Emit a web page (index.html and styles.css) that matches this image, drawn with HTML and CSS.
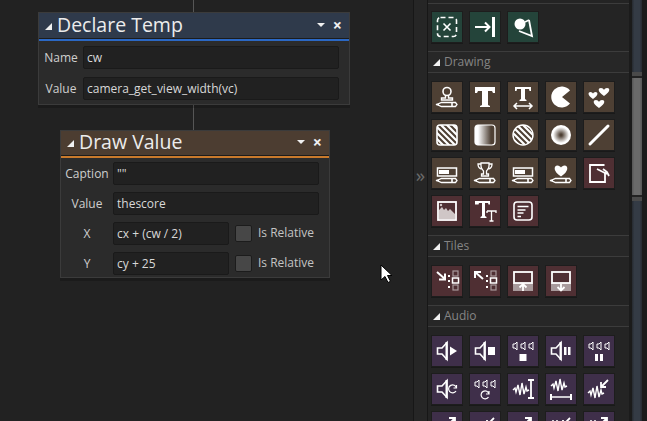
FILE: index.html
```html
<!DOCTYPE html>
<html lang="en">

<head>
    <meta charset="UTF-8">
    <title>Object Events</title>
    <link rel="stylesheet" href="styles.css">
</head>

<body>
    <svg class="defs" width="0" height="0" aria-hidden="true">
        <defs>
            <linearGradient id="fadeH"><stop offset="0.15" stop-color="#fff"/><stop offset="0.8" stop-color="#4e4034"/></linearGradient>
            <radialGradient id="fadeR"><stop offset="0.1" stop-color="#4e4034"/><stop offset="0.8" stop-color="#fff"/></radialGradient>
            <clipPath id="clipRect"><rect x="5" y="5" width="20" height="20" rx="3"/></clipPath>
            <clipPath id="clipCircle"><circle cx="15" cy="15" r="10"/></clipPath>
            <symbol id="stripes" viewBox="0 0 30 30">
                <path d="M0 -16L40 24M0 -10L40 30M0 -4L40 36M0 2L40 42M0 8L40 48M0 14L40 54" stroke="#fff" stroke-width="2.200"/>
            </symbol>
            <symbol id="pencil" viewBox="0 0 30 30">
                <path d="M9.500 20.500h14l1.500 2-1.500 2h-14L5 22.500z" fill="none" stroke="#fff" stroke-width="1.300"/>
                <path d="M4 22.500h3M20 21v3" stroke="#fff" stroke-width="1.600"/>
            </symbol>
            <symbol id="bar" viewBox="0 0 30 30">
                <rect x="5.500" y="10" width="19" height="8" fill="none" stroke="#fff" stroke-width="1.500"/>
                <rect x="7" y="12" width="10" height="4" fill="#fff"/>
            </symbol>
            <symbol id="speaker" viewBox="0 0 30 30">
                <path d="M5.500 12h4.500l5-5.500v17l-5-5.500H5.500z" fill="none" stroke="#fff" stroke-width="1.600"/>
                <path d="M14.500 6v18" stroke="#fff" stroke-width="2"/>
            </symbol>
            <symbol id="speakers" viewBox="0 0 30 30">
                <g fill="none" stroke="#fff" stroke-width="1">
                    <path d="M5 8h2l2-2v8l-2-2H5z"/>
                    <path d="M13 8h2l2-2v8l-2-2h-2z"/>
                    <path d="M21 8h2l2-2v8l-2-2h-2z"/>
                </g>
            </symbol>
            <symbol id="wave" viewBox="0 0 30 30">
                <path d="M5 16l2-2 1 4 2-7 2 10 2-12 2 11 2-7 1 4 2-1" fill="none" stroke="#fff" stroke-width="1.400"/>
            </symbol>
            <symbol id="slots" viewBox="0 0 30 30">
                <path d="M16 10h2M16 15h2M16 21h2" stroke="#fff" stroke-width="2"/>
                <rect x="21" y="5" width="5" height="5" fill="none" stroke="#a89a9c" stroke-width="1.200"/>
                <rect x="20.500" y="12" width="6" height="5" fill="none" stroke="#fff" stroke-width="1.500"/>
                <rect x="21" y="19" width="5" height="5" fill="none" stroke="#a89a9c" stroke-width="1.200"/>
            </symbol>
        </defs>
    </svg>

    <div class="app">
        <main class="canvas">
            <div class="wire wire-top"></div>
            <div class="wire wire-mid"></div>

            <section class="node node-temp">
                <header class="node-title title-blue">
                    <span class="corner"></span>
                    <h2>Declare Temp</h2>
                    <span class="menu-arrow"></span>
                    <span class="close">×</span>
                </header>
                <div class="node-body">
                    <div class="row">
                        <label class="row-label">Name</label>
                        <div class="field">cw</div>
                    </div>
                    <div class="row">
                        <label class="row-label">Value</label>
                        <div class="field">camera_get_view_width(vc)</div>
                    </div>
                </div>
            </section>

            <section class="node node-draw">
                <header class="node-title title-orange">
                    <span class="corner"></span>
                    <h2>Draw Value</h2>
                    <span class="menu-arrow"></span>
                    <span class="close">×</span>
                </header>
                <div class="node-body">
                    <div class="row">
                        <label class="row-label">Caption</label>
                        <div class="field">""</div>
                    </div>
                    <div class="row">
                        <label class="row-label">Value</label>
                        <div class="field">thescore</div>
                    </div>
                    <div class="row">
                        <label class="row-label">X</label>
                        <div class="field field-short">cx + (cw / 2)</div>
                        <span class="check"></span>
                        <span class="check-label">Is Relative</span>
                    </div>
                    <div class="row">
                        <label class="row-label">Y</label>
                        <div class="field field-short">cy + 25</div>
                        <span class="check"></span>
                        <span class="check-label">Is Relative</span>
                    </div>
                </div>
            </section>

            <svg class="cursor" width="14" height="20" viewBox="0 0 14 20">
                <path d="M1 1v15l4-3.500 3 6 2.500-1.200-3-5.800H12z" fill="#fff" stroke="#000"/>
            </svg>
        </main>

        <div class="splitter">»</div>

        <aside class="palette">
            <div class="top-rule"></div>

            <div class="tiles">
                <div class="tile green">
                    <svg viewBox="0 0 30 30"><rect x="5.500" y="5.500" width="19" height="19" rx="3" fill="none" stroke="#fff" stroke-width="1.600" stroke-dasharray="5 3"/><path d="M11.500 11.500l7 7M18.500 11.500l-7 7" stroke="#fff" stroke-width="1.600"/></svg>
                </div>
                <div class="tile green">
                    <svg viewBox="0 0 30 30"><path d="M5 15h14M15 10.500l4.500 4.500-4.500 4.500" fill="none" stroke="#fff" stroke-width="2"/><path d="M23.500 5v20" stroke="#fff" stroke-width="3"/></svg>
                </div>
                <div class="tile green">
                    <svg viewBox="0 0 30 30"><circle cx="12" cy="12" r="5.500" fill="#fff"/><path d="M21 8l3 16-13-5" fill="none" stroke="#fff" stroke-width="1.800"/><path d="M17 10l4-2" stroke="#fff" stroke-width="1.500"/></svg>
                </div>
            </div>

            <h3 class="section"><span class="corner corner-dim"></span>Drawing</h3>
            <div class="tiles">
                <div class="tile brown">
                    <svg viewBox="0 0 30 30"><circle cx="15" cy="9.500" r="4" fill="none" stroke="#fff" stroke-width="1.600"/><path d="M13.500 13v3h-4v2h11v-2h-4v-3" fill="none" stroke="#fff" stroke-width="1.400"/><use href="#pencil"/></svg>
                </div>
                <div class="tile brown">
                    <svg viewBox="0 0 30 30"><path d="M5 5h20v6h-2l-1-2h-4v14l2 1v1h-10v-1l2-1V9H8l-1 2H5z" fill="#fff"/></svg>
                </div>
                <div class="tile brown">
                    <svg viewBox="0 0 30 30"><path d="M7 5h16v4h-1.500l-.5-2h-4v10l1.500 1v1h-7v-1l1.500-1V7H9l-.5 2H7z" fill="#fff"/><path d="M6 24h18M9 21l-3 3 3 3M21 21l3 3-3 3" fill="none" stroke="#fff" stroke-width="1.500"/></svg>
                </div>
                <div class="tile brown">
                    <svg viewBox="0 0 30 30"><path d="M16 15l8-6.500a10.500 10.500 0 1 0 0 13z" fill="#fff"/></svg>
                </div>
                <div class="tile brown">
                    <svg viewBox="0 0 30 30" fill="#fff"><path d="M9 17c-6-4-5-7-2.500-7 1.200 0 2 .8 2.500 1.500.5-.7 1.300-1.500 2.500-1.500 2.500 0 3.500 3-2.500 7z"/><path d="M20 14c-7-4.500-6-8-3-8 1.300 0 2.400 1 3 1.800.6-.8 1.700-1.800 3-1.800 3 0 4 3.500-3 8z"/><path d="M15 26c-7-4.500-6-8-3-8 1.300 0 2.400 1 3 1.800.6-.8 1.700-1.800 3-1.800 3 0 4 3.500-3 8z"/></svg>
                </div>

                <div class="tile brown">
                    <svg viewBox="0 0 30 30"><rect x="5" y="5" width="20" height="20" rx="3" fill="none" stroke="#fff" stroke-width="1.600"/><g clip-path="url(#clipRect)"><use href="#stripes"/></g></svg>
                </div>
                <div class="tile brown">
                    <svg viewBox="0 0 30 30"><rect x="5" y="5" width="20" height="20" rx="3" fill="url(#fadeH)" stroke="#fff" stroke-width="1.200"/></svg>
                </div>
                <div class="tile brown">
                    <svg viewBox="0 0 30 30"><circle cx="15" cy="15" r="10" fill="none" stroke="#fff" stroke-width="1.400"/><g clip-path="url(#clipCircle)"><use href="#stripes"/></g></svg>
                </div>
                <div class="tile brown">
                    <svg viewBox="0 0 30 30"><circle cx="15" cy="15" r="10" fill="url(#fadeR)"/></svg>
                </div>
                <div class="tile brown">
                    <svg viewBox="0 0 30 30"><path d="M6 24l18-18" stroke="#fff" stroke-width="3" stroke-linecap="round"/></svg>
                </div>

                <div class="tile brown">
                    <svg viewBox="0 0 30 30"><use href="#bar"/><use href="#pencil"/></svg>
                </div>
                <div class="tile brown">
                    <svg viewBox="0 0 30 30"><path d="M11 5h8v3c0 3-2 4-2.500 5v3h2v2h-7v-2h2v-3c-.5-1-2.500-2-2.500-5zM11 6H8c0 3 1.500 4.500 3.500 5M19 6h3c0 3-1.500 4.500-3.500 5" fill="none" stroke="#fff" stroke-width="1.300"/><use href="#pencil"/></svg>
                </div>
                <div class="tile brown">
                    <svg viewBox="0 0 30 30"><use href="#bar"/><use href="#pencil"/></svg>
                </div>
                <div class="tile brown">
                    <svg viewBox="0 0 30 30"><path d="M15 18.500c-8-5-7.500-11-3.500-11 1.500 0 2.800 1 3.500 2 .7-1 2-2 3.500-2 4 0 4.500 6-3.500 11z" fill="#fff"/><use href="#pencil"/></svg>
                </div>
                <div class="tile maroon">
                    <svg viewBox="0 0 30 30"><path d="M20.500 7H6v17h15V14" fill="none" stroke="#fff" stroke-width="1.800"/><path d="M13 11l10 5M19 11l4 3 2 4" fill="none" stroke="#fff" stroke-width="1.800"/></svg>
                </div>

                <div class="tile maroon">
                    <svg viewBox="0 0 30 30"><rect x="6" y="6" width="18" height="18" fill="none" stroke="#fff" stroke-width="1.800"/><path d="M7 23v-9l3-3 2 3 2-2 2 3 2-2 5 5v5z" fill="#cfc6c6"/><circle cx="9" cy="9" r="1.200" fill="#cfc6c6"/></svg>
                </div>
                <div class="tile maroon">
                    <svg viewBox="0 0 30 30"><path d="M5 5h15v3.500h-1.500l-.5-1.500h-3v13l1.500 1v1h-6v-1l1.500-1V7H9l-.5 1.500H5z" fill="#fff"/><path d="M17 15h9v2M17 17v-2M21.500 15v10M19.500 25h4" fill="none" stroke="#fff" stroke-width="1.300"/></svg>
                </div>
                <div class="tile maroon">
                    <svg viewBox="0 0 30 30"><rect x="6" y="6" width="18" height="18" rx="3" fill="none" stroke="#fff" stroke-width="1.600"/><path d="M9.500 10.500h11M9.500 14h8M9.500 17h6M9.500 20.500h3.500" stroke="#fff" stroke-width="1.500"/></svg>
                </div>
            </div>

            <h3 class="section"><span class="corner corner-dim"></span>Tiles</h3>
            <div class="tiles">
                <div class="tile maroon">
                    <svg viewBox="0 0 30 30"><path d="M5 6l8 7M13 7.500v6H7" fill="none" stroke="#fff" stroke-width="2"/><use href="#slots"/></svg>
                </div>
                <div class="tile maroon">
                    <svg viewBox="0 0 30 30"><path d="M13 13L5 6M5 12V6h6" fill="none" stroke="#fff" stroke-width="2"/><use href="#slots"/></svg>
                </div>
                <div class="tile maroon">
                    <svg viewBox="0 0 30 30"><rect x="5" y="17" width="20" height="8" fill="#a89a9c"/><rect x="6" y="6" width="18" height="11" fill="#4f2f33" stroke="#fff" stroke-width="1.800"/><path d="M15 25v-6M11.500 21.500l3.500-3.500 3.500 3.500" fill="none" stroke="#fff" stroke-width="1.800"/></svg>
                </div>
                <div class="tile maroon">
                    <svg viewBox="0 0 30 30"><rect x="5" y="17" width="20" height="8" fill="#a89a9c"/><rect x="6" y="6" width="18" height="11" fill="#4f2f33" stroke="#fff" stroke-width="1.800"/><path d="M15 18v6M11.500 21l3.500 3.500 3.500-3.500" fill="none" stroke="#fff" stroke-width="1.800"/></svg>
                </div>
            </div>

            <h3 class="section"><span class="corner corner-dim"></span>Audio</h3>
            <div class="tiles">
                <div class="tile purple">
                    <svg viewBox="0 0 30 30"><use href="#speaker"/><path d="M18 10.500l7 4.500-7 4.500z" fill="#fff"/></svg>
                </div>
                <div class="tile purple">
                    <svg viewBox="0 0 30 30"><use href="#speaker"/><rect x="18" y="11" width="7" height="8" fill="#fff"/></svg>
                </div>
                <div class="tile purple">
                    <svg viewBox="0 0 30 30"><use href="#speakers"/><rect x="11.500" y="18" width="7" height="7" fill="#fff"/></svg>
                </div>
                <div class="tile purple">
                    <svg viewBox="0 0 30 30"><use href="#speaker"/><path d="M18 11h2.500v8H18zM22 11h2.500v8H22z" fill="#fff"/></svg>
                </div>
                <div class="tile purple">
                    <svg viewBox="0 0 30 30"><use href="#speakers"/><path d="M11 18h3v7h-3zM16 18h3v7h-3z" fill="#fff"/></svg>
                </div>

                <div class="tile purple">
                    <svg viewBox="0 0 30 30"><use href="#speaker"/><path d="M24.500 14a4 4 0 1 0-.5 3M24.500 11v3h-3" fill="none" stroke="#fff" stroke-width="1.200"/></svg>
                </div>
                <div class="tile purple">
                    <svg viewBox="0 0 30 30"><use href="#speakers"/><path d="M19 20a4 4 0 1 0-.5 3M19 17v3h-3" fill="none" stroke="#fff" stroke-width="1.200"/></svg>
                </div>
                <div class="tile purple">
                    <svg viewBox="0 0 30 30"><use href="#wave"/><path d="M23 6v18M20 6h6M20 24h6" fill="none" stroke="#fff" stroke-width="1.800"/></svg>
                </div>
                <div class="tile purple">
                    <svg viewBox="0 0 30 30"><use href="#wave" y="-4"/><path d="M6 23h18" stroke="#fff" stroke-width="1.500"/><path d="M5 20v6M25 20v6" stroke="#fff" stroke-width="2"/></svg>
                </div>
                <div class="tile purple">
                    <svg viewBox="0 0 30 30"><use href="#wave" x="-1" y="3"/><path d="M24 6l-7 7M17 8v5h5" fill="none" stroke="#fff" stroke-width="1.800"/></svg>
                </div>

                <div class="tile purple">
                    <svg viewBox="0 0 30 30"><path d="M15 14l7-7M17 6h6v6" fill="none" stroke="#fff" stroke-width="1.800"/><path d="M5 16h6" stroke="#fff" stroke-width="1.500"/></svg>
                </div>
                <div class="tile purple">
                    <svg viewBox="0 0 30 30"><path d="M24 6l-7 7M17 8v5h5" fill="none" stroke="#fff" stroke-width="1.800"/><path d="M5 16h6" stroke="#fff" stroke-width="1.500"/></svg>
                </div>
                <div class="tile purple">
                    <svg viewBox="0 0 30 30"><path d="M15 14l7-7M17 6h6v6" fill="none" stroke="#fff" stroke-width="1.800"/><path d="M5 16h6" stroke="#fff" stroke-width="1.500"/></svg>
                </div>
                <div class="tile purple">
                    <svg viewBox="0 0 30 30"><path d="M24 6l-7 7M17 8v5h5" fill="none" stroke="#fff" stroke-width="1.800"/><path d="M7 8v6M11 8v6" stroke="#fff" stroke-width="1.500"/></svg>
                </div>
                <div class="tile purple">
                    <svg viewBox="0 0 30 30"><path d="M15 14l7-7M17 6h6v6" fill="none" stroke="#fff" stroke-width="1.800"/><path d="M7 8v6M11 8v6" stroke="#fff" stroke-width="1.500"/></svg>
                </div>
            </div>
        </aside>

        <div class="scrollbar">
            <div class="scroll-track scroll-track-top"></div>
            <div class="scroll-cap"></div>
            <div class="scroll-thumb"></div>
            <div class="scroll-cap scroll-cap-end"></div>
            <div class="scroll-track"></div>
        </div>
    </div>
</body>

</html>
```

FILE: styles.css
```css
html,
body {
    margin: 0;
    height: 100%;
    overflow: hidden;
}

body {
    font-family: 'Open Sans', 'Noto Sans', sans-serif;
    background-color: #222222;
    color: #dcdcdc;
}

.defs {
    position: absolute;
}

.app {
    display: flex;
    height: 421px;
    overflow: hidden;
}

/* canvas with the event nodes */

.canvas {
    position: relative;
    width: 413px;
    flex: none;
}

.wire {
    position: absolute;
    left: 193px;
    width: 1px;
    background-color: #565656;
}

.wire-top {
    top: 0;
    height: 12px;
}

.wire-mid {
    top: 105px;
    height: 25px;
}

.node {
    position: absolute;
    box-sizing: border-box;
    background-color: #2b2b2b;
    border: 1px solid #3b3b3b;
    box-shadow: 0 3px 0 rgba(0, 0, 0, 0.18);
}

.node-temp {
    left: 38px;
    top: 12px;
    width: 312px;
    height: 93px;
}

.node-draw {
    left: 60px;
    top: 130px;
    width: 270px;
    height: 148px;
}

.node-temp .row-label {
    width: 44px;
}

.node-draw .row-label {
    width: 52px;
}

.node-title {
    display: flex;
    align-items: center;
    box-sizing: content-box;
    height: 22px;
    padding: 0 6px 3px;
    border-bottom: 2px solid;
    box-shadow: inset 0 -1px 0 #1c1c1c;
}

.node-temp .node-title {
    height: 24px;
    padding-bottom: 2px;
}

.title-blue {
    background-color: #2f3a4b;
    border-bottom-color: #2b68c4;
}

.title-orange {
    background-color: #4c3d31;
    border-bottom-color: #c97a2c;
}

.node-title h2 {
    flex: 1;
    margin: 0 0 0 5px;
    font-size: 19.5px;
    font-weight: 400;
    line-height: 22px;
    color: #ececec;
    white-space: nowrap;
}

.corner {
    width: 0;
    height: 0;
    border-style: solid;
    border-width: 0 0 7px 7px;
    border-color: transparent transparent #f0f0f0 transparent;
    margin-top: 3px;
}

.section .corner-dim {
    margin: 2px 4px 0 0;
}

.menu-arrow {
    width: 0;
    height: 0;
    border-style: solid;
    border-width: 4px 4px 0 4px;
    border-color: #f0f0f0 transparent transparent transparent;
    margin-right: 8px;
}

.close {
    font-size: 16px;
    font-weight: 700;
    line-height: 22px;
    color: #f0f0f0;
    margin-right: 1px;
}

.node-body {
    display: flex;
    flex-direction: column;
    gap: 7px;
    padding: 4px 10px 0 0;
}

.node-temp .node-body {
    gap: 8px;
    padding-top: 5px;
}

.row {
    display: flex;
    align-items: center;
    height: 23px;
}

.row-label {
    flex: none;
    text-align: center;
    font-size: 12px;
    color: #cfcfcf;
}

.field {
    flex: 1;
    box-sizing: border-box;
    height: 23px;
    padding: 0 3px;
    font-size: 12px;
    line-height: 21px;
    color: #d8d8d8;
    background-color: #212121;
    border: 1px solid #1a1a1a;
    border-radius: 2px;
    white-space: nowrap;
}

.field-short {
    flex: none;
    width: 116px;
}

.check {
    flex: none;
    box-sizing: border-box;
    width: 17px;
    height: 17px;
    margin: 0 6px;
    background-color: #474747;
    border: 1px solid #1c1c1c;
    border-radius: 2px;
}

.check-label {
    font-size: 12px;
    color: #c4c4c4;
    white-space: nowrap;
    margin-top: -3px;
}

.cursor {
    position: absolute;
    left: 380px;
    top: 264px;
}

/* strip between canvas and palette */

.splitter {
    flex: none;
    box-sizing: border-box;
    width: 15px;
    border-left: 1px solid #171717;
    border-right: 1px solid #171717;
    background-color: #262626;
    padding-top: 164px;
    font-size: 19px;
    line-height: 22px;
    text-align: center;
    color: #6c6c6c;
}

/* palette of action tiles */

.palette {
    flex: none;
    width: 201px;
    background-color: #242424;
}

.top-rule {
    height: 3px;
    border-bottom: 1px solid #3c3c3c;
    margin-bottom: 8px;
}

.tiles {
    display: flex;
    flex-wrap: wrap;
    gap: 8px;
    padding: 0 4px;
}

.tile {
    width: 30px;
    height: 30px;
    box-shadow: 0 0 0 1px #1d1d1d, 0 1px 0 1px #191919;
}

.tile svg {
    display: block;
    width: 30px;
    height: 30px;
}

.green {
    background-color: #24443a;
}

.brown {
    background-color: #4e4034;
}

.maroon {
    background-color: #4f2f33;
}

.purple {
    background-color: #3f2f4a;
}

.section {
    display: flex;
    align-items: center;
    box-sizing: border-box;
    height: 22px;
    margin: 9px 0 9px;
    padding: 0 0 2px 5px;
    background-color: #272727;
    border-top: 1px solid #3c3c3c;
    border-bottom: 1px solid #3c3c3c;
    font-size: 12px;
    font-weight: 400;
    color: #858585;
}

/* scrollbar */

.scrollbar {
    display: flex;
    flex-direction: column;
    flex: none;
    box-sizing: border-box;
    width: 18px;
    height: 421px;
    padding: 0 5px 0 3px;
    background-color: #1b1b1b;
}

.scroll-track {
    flex: 1;
    background: linear-gradient(to right, #262a30, #343b45 25%, #343b45 75%, #262a30);
}

.scroll-track-top {
    flex: none;
    height: 72px;
}

.scroll-cap {
    height: 4px;
    background-color: #4a4a4a;
    border-bottom: 2px solid #222222;
}

.scroll-cap-end {
    border-top: 2px solid #222222;
    border-bottom: 0;
}

.scroll-thumb {
    height: 117px;
    background: linear-gradient(to right, #565656, #6a6a6a 25%, #6a6a6a 75%, #565656);
}
```
